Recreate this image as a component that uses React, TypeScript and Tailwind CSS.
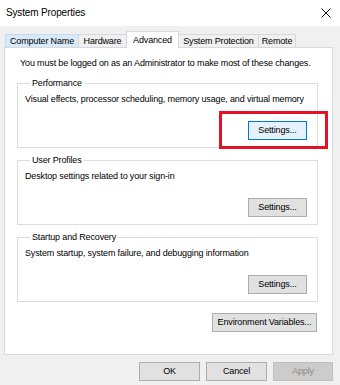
import React from 'react';

const tabs = [
  { label: 'Computer Name', w: 'w-[74px]', style: 'bg-[#d8eaf9] border-[#c5dcf0]' },
  { label: 'Hardware', w: 'w-[49px]', style: 'bg-[#f0f0f0] border-[#d9d9d9]' },
  { label: 'Advanced', w: 'w-[53px]', active: true },
  { label: 'System Protection', w: 'w-[81px]', style: 'bg-[#f0f0f0] border-[#d9d9d9]' },
  { label: 'Remote', w: 'w-[38px]', style: 'bg-[#f0f0f0] border-[#d9d9d9]' },
];

const Btn: React.FC<{ label: string; w: string; variant?: 'default' | 'focus' | 'disabled'; className?: string }> = ({
  label,
  w,
  variant = 'default',
  className = '',
}) => {
  const look =
    variant === 'focus'
      ? 'bg-[#e5f1fb] border-[#0078d7] text-black'
      : variant === 'disabled'
        ? 'bg-[#cccccc] border-[#bfbfbf] text-[#8a8a8a]'
        : 'bg-[#e1e1e1] border-[#adadad] text-black';
  return (
    <button className={`${w} h-[19px] border flex items-center justify-center text-[9px] leading-none whitespace-nowrap ${look} ${className}`}>
      {label}
    </button>
  );
};

const Group: React.FC<{ title: string; desc: string; focus?: boolean }> = ({ title, desc, focus }) => (
  <fieldset className="h-[71px] border border-[#dcdcdc] pl-[7px] pr-[10px]">
    <legend className="ml-[5px] px-[2px] text-[9px] leading-[12px]">{title}</legend>
    <p className="mt-[4px] text-[9px] leading-[12px] whitespace-nowrap">{desc}</p>
    <div className="mt-[16px] flex justify-end">
      <Btn label="Settings..." w="w-[59px]" variant={focus ? 'focus' : 'default'} />
    </div>
  </fieldset>
);

export default function App() {
  return (
    <div className="relative w-[340px] h-[385px] overflow-hidden bg-[#f0f0f0] text-black tracking-[-0.15px] font-['Liberation_Sans',Arial,sans-serif]">
      {/* title bar */}
      <div className="h-[26px] bg-white flex items-center justify-between pl-[6px] pr-[8px]">
        <span className="text-[10px] leading-none">System Properties</span>
        <svg width="10" height="10" viewBox="0 0 10 10" className="mr-[1px]">
          <path d="M0.5 0.5 L9.5 9.5 M9.5 0.5 L0.5 9.5" stroke="#111" strokeWidth="1" fill="none" />
        </svg>
      </div>

      {/* tabs */}
      <div className="h-[21px] flex items-end pl-[5px]">
        {tabs.map((t, i) =>
          t.active ? (
            <div
              key={t.label}
              className={`${t.w} h-[17px] -mb-px -ml-px relative z-10 bg-white border border-b-0 border-[#d9d9d9] flex items-start justify-center pt-[2px] text-[9px] leading-[12px] whitespace-nowrap`}
            >
              {t.label}
            </div>
          ) : (
            <div
              key={t.label}
              className={`${t.w} h-[13px] ${i > 0 ? '-ml-px' : ''} border border-b-0 ${t.style} flex items-center justify-center text-[9px] leading-none whitespace-nowrap`}
            >
              {t.label}
            </div>
          ),
        )}
      </div>

      {/* panel */}
      <div className="ml-[4px] w-[329px] h-[308px] bg-white border border-[#d9d9d9] pl-[12px] pr-[14px] pt-[9px] flex flex-col">
        <p className="ml-[3px] text-[9px] leading-[12px] whitespace-nowrap">
          You must be logged on as an Administrator to make most of these changes.
        </p>
        <div className="mt-[8px] flex flex-col gap-[6px]">
          <Group title="Performance" desc="Visual effects, processor scheduling, memory usage, and virtual memory" focus />
          <Group title="User Profiles" desc="Desktop settings related to your sign-in" />
          <Group title="Startup and Recovery" desc="System startup, system failure, and debugging information" />
        </div>
        <div className="mt-[11px] flex justify-end pr-[1px]">
          <Btn label="Environment Variables..." w="w-[105px]" />
        </div>
      </div>

      {/* dialog buttons */}
      <div className="mt-[7px] flex justify-end gap-[6px] pr-[7px]">
        <Btn label="OK" w="w-[61px]" />
        <Btn label="Cancel" w="w-[61px]" />
        <Btn label="Apply" w="w-[60px]" variant="disabled" />
      </div>

      {/* highlight annotation */}
      <div className="absolute left-[219px] top-[111px] w-[109px] h-[38px] border-[3px] border-[#e81123] pointer-events-none" />
    </div>
  );
}
